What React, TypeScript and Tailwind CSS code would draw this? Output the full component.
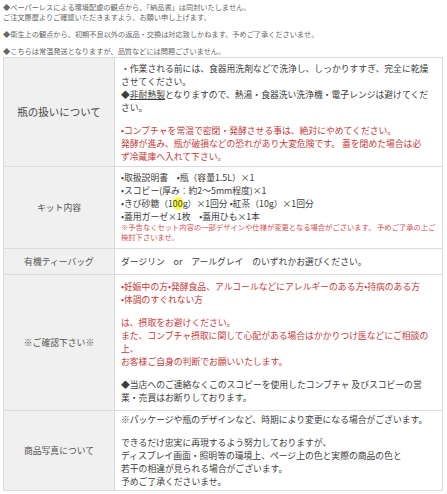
import type { ReactNode } from 'react'

interface RowProps {
  label: string
  big?: boolean
  pad?: string
  children: ReactNode
}

function Row({ label, big, pad, children }: RowProps) {
  return (
    <tr>
      <td
        className={
          big
            ? 'w-[111px] border border-[#dcdcdc] bg-[#f0f0f0] text-center align-middle text-[10.5px] text-[#4a4a4a]'
            : 'w-[111px] border border-[#dcdcdc] bg-[#f0f0f0] text-center align-middle text-[8.8px] text-[#555]'
        }
      >
        {label}
      </td>
      <td
        className={
          'border border-[#dcdcdc] bg-white pl-[6px] pr-[2px] align-top text-[8.8px] leading-[13px] text-[#3c3c3c] ' +
          (pad ?? 'pt-[4px] pb-[3px]')
        }
      >
        {children}
      </td>
    </tr>
  )
}

function L({ children, red }: { children: ReactNode; red?: boolean }) {
  return <div className={red ? 'whitespace-nowrap text-[#c53a3a]' : 'whitespace-nowrap'}>{children}</div>
}

export default function App() {
  return (
    <div className="min-h-[494px] w-[447px] bg-white font-['Noto_Sans_CJK_JP','Noto_Sans',sans-serif]">
      <div className="px-[3px] pt-[2px] text-[7.2px] leading-[10px] text-[#666]">
        <p className="whitespace-nowrap">◆ペーパーレスによる環境配慮の観点から、「納品書」は同封いたしません。</p>
        <p className="whitespace-nowrap">ご注文履歴よりご確認いただきますよう、お願い申し上げます。</p>
        <p className="mt-[7px] whitespace-nowrap">◆衛生上の観点から、初期不良以外の返品・交換は対応致しかねます。予めご了承くださいませ。</p>
        <p className="mt-[7px] whitespace-nowrap">◆こちらは常温発送となりますが、品質などには問題ございません。</p>
      </div>

      <table className="ml-[3px] mt-[1px] w-[440px] border-collapse border border-[#dcdcdc]">
        <tbody>
          <Row label="瓶の扱いについて" big>
            <L>・作業される前には、食器用洗剤などで洗浄し、しっかりすすぎ、完全に乾燥</L>
            <L>させてください。</L>
            <L>
              ◆<span className="underline">非耐熱製</span>となりますので、熱湯・食器洗い洗浄機・電子レンジは避けてくだ
            </L>
            <L>さい。</L>
            <div className="mt-[10px]">
              <L red>•コンブチャを常温で密閉・発酵させる事は、絶対にやめてください。</L>
              <L red>発酵が進み、瓶が破損などの恐れがあり大変危険です。 蓋を閉めた場合は必</L>
              <L red>ず冷蔵庫へ入れて下さい。</L>
            </div>
          </Row>

          <Row label="キット内容" pad="pt-[4px] pb-[6px]">
            <L>•取扱説明書　•瓶（容量1.5L）×1</L>
            <L>•スコビー(厚み：約2～5mm程度)×1</L>
            <L>
              •きび砂糖（1<span className="rounded-full bg-[#ffff3c]">00</span>g）×1回分 •紅茶（10g）×1回分
            </L>
            <L>•蓋用ガーゼ×1枚　•蓋用ひも×1本</L>
            <div className="text-[7.3px] leading-[9.5px] text-[#d25050]">
              <div className="whitespace-nowrap">※予告なくセット内容の一部デザインや仕様が変更となる場合がございます。 予めご了承の上ご</div>
              <div className="whitespace-nowrap">検討下さいませ。</div>
            </div>
          </Row>

          <Row label="有機ティーバッグ" pad="py-[6px]">
            <L>ダージリン　or　アールグレイ　のいずれかお選びください。</L>
          </Row>

          <Row label="※ご確認下さい※" pad="pt-[5px] pb-[6px]">
            <L red>•妊娠中の方•発酵食品、アルコールなどにアレルギーのある方•持病のある方</L>
            <L red>•体調のすぐれない方</L>
            <div className="mt-[10px]">
              <L red>は、摂取をお避けください。</L>
              <L red>また、コンブチャ摂取に関して心配がある場合はかかりつけ医などにご相談の</L>
              <L red>上、</L>
              <L red>お客様ご自身の判断でお願いいたします。</L>
            </div>
            <div className="mt-[10px]">
              <L>◆当店へのご連絡なくこのスコビーを使用したコンブチャ 及びスコビーの営</L>
              <L>業・売買はお断りしております。</L>
            </div>
          </Row>

          <Row label="商品写真について" pad="pt-[2px] pb-[2px]">
            <L>※パッケージや瓶のデザインなど、時期により変更になる場合がございます。</L>
            <div className="mt-[10px]">
              <L>できるだけ忠実に再現するよう努力しておりますが、</L>
              <L>ディスプレイ画面・照明等の環境上、ページ上の色と実際の商品の色と</L>
              <L>若干の相違が見られる場合がございます。</L>
              <L>予めご了承くださいませ。</L>
            </div>
          </Row>
        </tbody>
      </table>
    </div>
  )
}
